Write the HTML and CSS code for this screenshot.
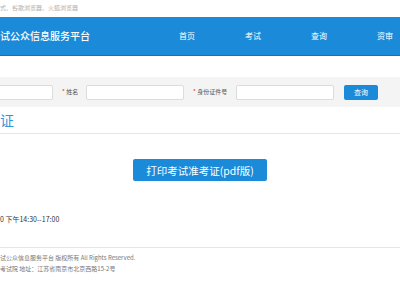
FILE: index.html
```html
<!DOCTYPE html>
<html lang="zh-CN">
<head>
  <meta charset="UTF-8" />
  <title>考试公众信息服务平台</title>
  <link rel="stylesheet" href="styles.css">
</head>
<body>
  <div class="topbar">式、谷歌浏览器、火狐浏览器</div>

  <div class="header">
    <div class="logo">试公众信息服务平台</div>
    <ul class="nav">
      <li>首页</li>
      <li>考试</li>
      <li>查询</li>
      <li>资审</li>
    </ul>
  </div>

  <div class="search">
    <input type="text" class="field field-first">
    <label class="lbl lbl-name"><em>*</em> 姓名</label>
    <input type="text" class="field">
    <label class="lbl lbl-id"><em>*</em> 身份证件号</label>
    <input type="text" class="field">
    <button class="btn-search">查询</button>
  </div>

  <div class="section-title">证</div>

  <div class="content">
    <button class="btn-print">打印考试准考证(pdf版)</button>
    <p class="time">0 下午14:30--17:00</p>
  </div>

  <div class="footer">
    <p>试公众信息服务平台 版权所有 All Rights Reserved.</p>
    <p>考试院 地址：江苏省南京市北京西路15-2号</p>
  </div>
</body>
</html>
```

FILE: styles.css
```css
:root {
  --blue: #1b8ad8;
  --blue-dark: #1572b8;
  --band: #f4f4f4;
  --line: #e6e6e6;
}

* {
  box-sizing: border-box;
  margin: 0;
  padding: 0;
  font-family: "Noto Sans CJK SC", "Liberation Sans", sans-serif;
}

body {
  width: 400px;
  height: 300px;
  overflow: hidden;
  background: #fff;
  color: #333;
}

.topbar {
  height: 17px;
  font-size: 6px;
  line-height: 16px;
  color: #b0b0b0;
}

.header {
  display: flex;
  align-items: center;
  height: 39px;
  background: var(--blue);
  border-bottom: 1px solid var(--blue-dark);
  color: #fff;
}

.logo {
  flex-shrink: 0;
  width: 154px;
  font-size: 10px;
  font-weight: 500;
  line-height: 14px;
}

.nav {
  display: flex;
  flex-shrink: 0;
  list-style: none;
}

.nav li {
  flex-shrink: 0;
  width: 66px;
  text-align: center;
  font-size: 8px;
  line-height: 10px;
}

.search {
  display: flex;
  align-items: center;
  height: 30px;
  margin-top: 21px;
  background: var(--band);
}

.field {
  flex-shrink: 0;
  width: 98px;
  height: 15px;
  margin-right: 9px;
  border: 1px solid #dcdcdc;
  border-radius: 2px;
  background: #fff;
}

.field-first {
  width: 73px;
  margin-left: -20px;
}

.lbl {
  flex-shrink: 0;
  font-size: 6px;
  line-height: 8px;
  color: #555;
}

.lbl em {
  font-style: normal;
  color: #d33;
}

.lbl-name {
  width: 24px;
}

.lbl-id {
  width: 43px;
}

.btn-search {
  width: 34px;
  height: 15px;
  margin-left: 1px;
  border: none;
  border-radius: 2px;
  background: var(--blue);
  color: #fff;
  font-size: 7px;
}

.section-title {
  height: 27px;
  border-bottom: 1px solid var(--line);
  font-size: 14px;
  line-height: 27px;
  color: #3596d6;
}

.content {
  height: 113px;
  padding-top: 25px;
}

.btn-print {
  display: block;
  width: 134px;
  height: 22px;
  margin: 0 auto;
  border: none;
  border-radius: 2px;
  background: var(--blue);
  color: #fff;
  font-size: 10.5px;
}

.time {
  margin-top: 33px;
  font-size: 7px;
  line-height: 10px;
  color: #333;
}

.footer {
  border-top: 1px solid var(--line);
  padding-top: 4px;
  font-size: 6px;
  line-height: 11px;
  color: #777;
}
```
